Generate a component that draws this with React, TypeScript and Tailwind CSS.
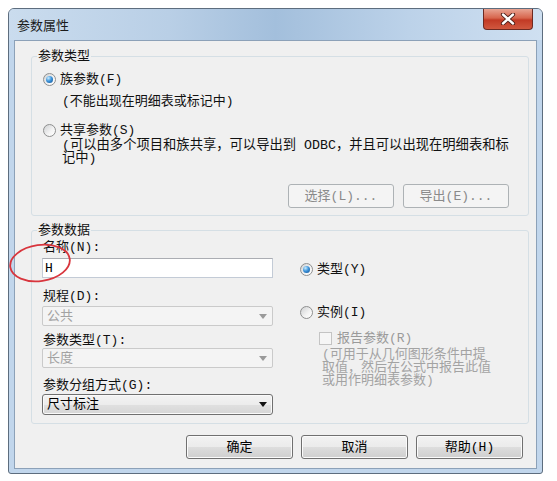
const btn =
  'flex h-[24px] w-[107px] items-center justify-center rounded-[3px] border border-[#707070] bg-[linear-gradient(to_bottom,#f2f2f2_0%,#ebebeb_50%,#dddddd_51%,#cfcfcf_100%)] shadow-[inset_0_0_0_1px_#fbfbfb] text-black';

function Radio({ checked }: { checked?: boolean }) {
  return (
    <span className="flex h-[13px] w-[13px] shrink-0 items-center justify-center rounded-full border border-[#8e8f8f] bg-[linear-gradient(135deg,#cfd1d3_0%,#f4f4f4_60%,#ffffff_100%)]">
      {checked && (
        <span className="h-[7px] w-[7px] rounded-full bg-[radial-gradient(circle_at_35%_30%,#c9ecff_0%,#3e95db_45%,#0c4b8f_100%)]" />
      )}
    </span>
  );
}

function Arrow({ color }: { color: string }) {
  return (
    <svg width="8" height="5" viewBox="0 0 8 5">
      <polygon points="0,0 8,0 4,5" fill={color} />
    </svg>
  );
}

function Dropdown({ value, disabled }: { value: string; disabled?: boolean }) {
  if (disabled) {
    return (
      <div className="flex h-[20px] items-center justify-between rounded-[2px] border border-[#cacaca] bg-[#f4f4f4] pl-[4px] pr-[5px] text-[#a2a2a2]">
        <span>{value}</span>
        <Arrow color="#9a9a9a" />
      </div>
    );
  }
  return (
    <div className="flex h-[21px] items-center justify-between rounded-[3px] border border-[#707070] bg-[linear-gradient(to_bottom,#f3f3f3_0%,#ececec_50%,#e0e0e0_51%,#d6d6d6_100%)] shadow-[inset_0_0_0_1px_#fafafa] pl-[4px] pr-[5px] text-black">
      <span>{value}</span>
      <Arrow color="#111" />
    </div>
  );
}

export default function App() {
  return (
    <div className="relative h-[481px] w-[557px] overflow-hidden bg-white pl-[8px] pt-[8px] font-[family-name:'Liberation_Mono','Noto_Sans_CJK_SC',monospace] text-[13px] leading-[13px] text-[#111]">
      <div className="flex h-[466px] w-[535px] flex-col rounded-t-[6px] rounded-b-[3px] border border-[#5d6d7e] bg-[#c1d6ec]">
        {/* title bar */}
        <div className="flex h-[31px] shrink-0 items-start justify-between rounded-t-[5px] bg-[linear-gradient(to_right,#cadcee_0%,#b9cfe6_30%,#a3bfdc_50%,#bcd2e9_75%,#cfe0f1_100%)]">
          <span className="mt-[9px] pl-[8px] font-[family-name:'Noto_Sans_CJK_SC',sans-serif] text-[13px] leading-[13px] text-[#1b1b1b]">
            参数属性
          </span>
          <div className="mr-[9px] flex h-[21px] w-[50px] items-center justify-center rounded-b-[4px] border border-t-0 border-[#6d2a22] bg-[linear-gradient(to_bottom,#e8a493_0%,#d7654d_45%,#c23a25_55%,#d0583f_100%)]">
            <svg width="16" height="12" viewBox="0 0 16 12">
              <path d="M3 1.5 L13 10.5 M13 1.5 L3 10.5" stroke="#4a1c16" strokeWidth="4.2" strokeLinecap="round" />
              <path d="M3 1.5 L13 10.5 M13 1.5 L3 10.5" stroke="#ffffff" strokeWidth="2.4" strokeLinecap="round" />
            </svg>
          </div>
        </div>

        {/* client area */}
        <div className="mx-[5px] mb-[4px] flex-1 border border-[#8ca1b8] bg-[#f0f0f0]">
          <fieldset className="ml-[16px] mt-[9px] w-[498px] rounded-[3px] border border-[#d5dfe5] pb-[7px]">
            <legend className="ml-[5px] px-[1px]">参数类型</legend>
            <div className="mt-[10px] flex h-[13px] items-center gap-[4px] pl-[11px]">
              <Radio checked />
              <span>族参数(F)</span>
            </div>
            <div className="mt-[9px] h-[13px] pl-[30px]">(不能出现在明细表或标记中)</div>
            <div className="mt-[16px] flex h-[13px] items-center gap-[4px] pl-[11px]">
              <Radio />
              <span>共享参数(S)</span>
            </div>
            <div className="mt-[2px] whitespace-nowrap pl-[30px] text-[13.3px] leading-[13px]">
              (可以由多个项目和族共享，可以导出到 ODBC，并且可以出现在明细表和标
              <br />
              记中)
            </div>
            <div className="mt-[19px] flex justify-end gap-[9px] pr-[19px]">
              <div className="flex h-[24px] w-[106px] items-center justify-center rounded-[3px] border border-[#adb2b5] bg-[#f4f4f4] text-[#8a8a8a]">
                选择(L)...
              </div>
              <div className="flex h-[24px] w-[106px] items-center justify-center rounded-[3px] border border-[#adb2b5] bg-[#f4f4f4] text-[#8a8a8a]">
                导出(E)...
              </div>
            </div>
          </fieldset>

          <fieldset className="ml-[16px] mt-[8px] w-[498px] rounded-[3px] border border-[#d5dfe5] pb-[8px]">
            <legend className="ml-[5px] px-[1px]">参数数据</legend>
            <div className="flex">
              <div className="ml-[10px] flex w-[231px] flex-col">
                <div className="mt-[4px] h-[13px] pl-[1px]">名称(N):</div>
                <div className="mt-[4px] flex h-[20px] items-center border border-[#c3cbd6] border-t-[#abadb3] bg-white pl-[2px] text-black">
                  H
                </div>
                <div className="mt-[12px] h-[13px] pl-[1px]">规程(D):</div>
                <div className="mt-[3px]">
                  <Dropdown value="公共" disabled />
                </div>
                <div className="mt-[8px] h-[13px] pl-[1px]">参数类型(T):</div>
                <div className="mt-[1px]">
                  <Dropdown value="长度" disabled />
                </div>
                <div className="mt-[11px] h-[13px] pl-[1px]">参数分组方式(G):</div>
                <div className="mt-[2px]">
                  <Dropdown value="尺寸标注" />
                </div>
              </div>

              <div className="ml-[27px] flex flex-col">
                <div className="mt-[26px] flex h-[13px] items-center gap-[4px]">
                  <Radio checked />
                  <span>类型(Y)</span>
                </div>
                <div className="mt-[30px] flex h-[13px] items-center gap-[4px]">
                  <Radio />
                  <span>实例(I)</span>
                </div>
                <div className="mt-[13px] flex h-[13px] items-center gap-[5px] pl-[19px] text-[#9a9a9a]">
                  <span className="h-[13px] w-[13px] border border-[#c4c4c4] bg-[#f6f6f6]" />
                  <span>报告参数(R)</span>
                </div>
                <div className="mt-[3px] whitespace-nowrap pl-[22px] leading-[13px] text-[#a3a3a3]">
                  (可用于从几何图形条件中提
                  <br />
                  取值，然后在公式中报告此值
                  <br />
                  或用作明细表参数)
                </div>
              </div>
            </div>
          </fieldset>

          <div className="mt-[11px] flex justify-end gap-[8px] pr-[13px]">
            <div className={btn + ' border-[#3c7fb1] shadow-[inset_0_0_0_1px_#bfe4fa]'}>确定</div>
            <div className={btn}>取消</div>
            <div className={btn}>帮助(H)</div>
          </div>
        </div>
      </div>

      {/* red annotation around the name field */}
      <svg className="pointer-events-none absolute left-0 top-0" width="557" height="481">
        <ellipse cx="40" cy="263" rx="30" ry="18" transform="rotate(-8 40 263)" fill="none" stroke="#d8353d" strokeWidth="1.8" />
      </svg>
    </div>
  );
}
